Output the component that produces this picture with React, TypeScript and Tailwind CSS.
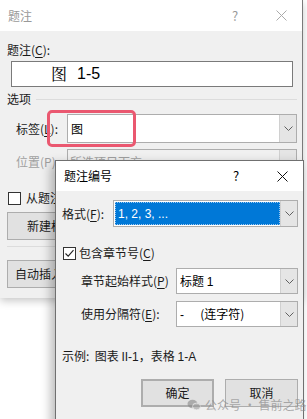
import React from "react";

// Combobox arrow
function Chevron() {
  return (
    <svg width="9" height="5" viewBox="0 0 9 5" fill="none">
      <path d="M0.5 0.5 L4.5 4.5 L8.5 0.5" stroke="#606060" strokeWidth="1" />
    </svg>
  );
}

function Key({ k }: { k: string }) {
  return <span className="underline underline-offset-2">{k}</span>;
}

function Select({
  children,
  className = "",
  disabled = false,
}: {
  children?: React.ReactNode;
  className?: string;
  disabled?: boolean;
}) {
  return (
    <div
      className={`flex border border-[#adadad] ${disabled ? "bg-[#f0f0f0] text-[#a0a0a0]" : "bg-white"} ${className}`}
    >
      <div className="flex-1 flex items-center min-w-0 overflow-hidden whitespace-nowrap">{children}</div>
      <div className="w-[17px] flex items-center justify-center bg-[#e5e5e5] border-l border-[#d0d0d0]">
        <Chevron />
      </div>
    </div>
  );
}

function Checkbox({ checked = false }: { checked?: boolean }) {
  return (
    <div className="w-[13px] h-[13px] shrink-0 border border-[#333] bg-white flex items-center justify-center">
      {checked && (
        <svg width="11" height="11" viewBox="0 0 11 11" fill="none">
          <path d="M1.5 5.5 L4.2 8.2 L9.5 2.2" stroke="#222" strokeWidth="1.1" />
        </svg>
      )}
    </div>
  );
}

function Button({ children, className = "" }: { children: React.ReactNode; className?: string }) {
  return (
    <div
      className={`h-[28px] flex items-center justify-center bg-[#e1e1e1] border border-[#adadad] ${className}`}
    >
      {children}
    </div>
  );
}

export default function App() {
  return (
    <div className="relative w-[307px] h-[419px] overflow-hidden bg-white text-[12px] leading-[16px] text-[#1a1a1a] font-['Noto_Sans_CJK_SC',sans-serif]">
      {/* ── 题注 (back window) ── */}
      <div className="w-[303px] border-r border-[#7a7a7a] shadow-[0_3px_8px_rgba(0,0,0,0.22)]">
        <div className="h-[31px] bg-white flex items-center pl-[8px] text-[#999]">
          <span className="flex-1">题注</span>
          <span className="w-[12px] text-center mr-[35px] text-[13px]">?</span>
          <svg width="11" height="11" viewBox="0 0 11 11" className="mr-[15px]">
            <path d="M0.5 0.5 L10.5 10.5 M10.5 0.5 L0.5 10.5" stroke="#aaa" strokeWidth="1" />
          </svg>
        </div>

        <div className="bg-[#f0f0f0] pl-[7px] pr-[5px] pt-[11px] pb-[10px] flex flex-col">
          <div className="h-[16px]">
            题注(<Key k="C" />):
          </div>
          <div className="mt-[3px] ml-[4px] w-[282px] h-[26px] bg-white border border-[#7a7a7a] flex items-center pl-[39px] text-[16px] text-black">
            <span className="font-['Noto_Serif_CJK_SC','Noto_Sans_CJK_SC',serif]">图</span>
            <span className="ml-[10px] font-['Liberation_Sans',sans-serif]">1-5</span>
          </div>

          <div className="mt-[4px] h-[16px] flex items-center">
            <span>选项</span>
            <div className="flex-1 ml-[5px] h-px bg-[#dcdcdc]" />
          </div>

          <div className="mt-[7px] flex items-center">
            <span className="ml-[9px] w-[51px]">
              标签(<Key k="L" />):
            </span>
            <Select className="w-[230px] h-[29px]">
              <span className="pl-[3px] text-black">图</span>
            </Select>
          </div>

          <div className="mt-[6px] flex items-center">
            <span className="ml-[9px] w-[51px] text-[#a0a0a0]">位置(P)</span>
            <Select disabled className="w-[230px] h-[26px]">
              <span className="pl-[2px]">所选项目下方</span>
            </Select>
          </div>

          {/* the rest of this row lies under the front window */}
          <div className="mt-[15px] h-[16px] w-[47px] overflow-hidden whitespace-nowrap flex items-center gap-[5px] ml-px">
            <Checkbox />
            <span>从题注</span>
          </div>

          <div className="mt-[6px] w-[48px] overflow-hidden">
            <Button className="w-[100px] justify-start pl-[19px]">
              <span className="w-[29px] overflow-hidden whitespace-nowrap">新建标</span>
            </Button>
          </div>

          <div className="mt-[6px] h-px bg-[#dcdcdc]" />

          <div className="mt-[13px] w-[48px] overflow-hidden">
            <Button className="w-[110px] justify-start pl-[7px]">
              <span className="w-[41px] overflow-hidden whitespace-nowrap">自动插入</span>
            </Button>
          </div>
        </div>
      </div>

      {/* red highlight around the label field */}
      <div className="absolute left-[47px] top-[110px] w-[89px] h-[37px] rounded-[5px] border-[3px] border-[#ea5870]" />

      {/* ── 题注编号 (front window) ── */}
      <div className="absolute left-[55px] top-[160px] w-[249px] h-[280px] border border-[#707070] shadow-[-4px_4px_10px_rgba(0,0,0,0.28)] flex flex-col">
        <div className="h-[30px] bg-white flex items-center pl-[8px] text-black">
          <span className="flex-1">题注编号</span>
          <span className="w-[12px] text-center mr-[35px] text-[13px]">?</span>
          <svg width="11" height="11" viewBox="0 0 11 11" className="mr-[15px]">
            <path d="M0.5 0.5 L10.5 10.5 M10.5 0.5 L0.5 10.5" stroke="#111" strokeWidth="1" />
          </svg>
        </div>

        <div className="flex-1 bg-[#f0f0f0] pl-[6px] pr-[5px] pt-[9px] flex flex-col">
          <div className="flex items-center">
            <span className="w-[51px]">
              格式(<Key k="F" />):
            </span>
            <Select className="w-[185px] h-[27px]">
              <div className="ml-px h-[23px] w-full bg-[#0078d7] outline outline-1 outline-dotted outline-[#9cc8f0] -outline-offset-1 text-white flex items-center pl-[3px] font-['Liberation_Sans',sans-serif]">
                1, 2, 3, ...
              </div>
            </Select>
          </div>

          <div className="mt-[18px] h-[16px] flex items-center gap-[3px] ml-px">
            <Checkbox checked />
            <span>
              包含章节号(<Key k="C" />)
            </span>
          </div>

          <div className="mt-[7px] flex items-center">
            <span className="ml-[19px] w-[95px]">
              章节起始样式(<Key k="P" />)
            </span>
            <Select className="w-[122px] h-[26px]">
              <span className="pl-[3px] text-black">
                标题 <span className="font-['Liberation_Sans',sans-serif]">1</span>
              </span>
            </Select>
          </div>

          <div className="mt-[7px] flex items-center">
            <span className="ml-[19px] w-[95px]">
              使用分隔符(<Key k="E" />):
            </span>
            <Select className="w-[122px] h-[26px]">
              <span className="pl-[3px] text-black whitespace-pre">
                <span className="font-['Liberation_Sans',sans-serif]">-</span>
                {"      "}(连字符)
              </span>
            </Select>
          </div>

          <div className="mt-[21px] h-[16px] whitespace-pre">
            示例:  图表 <span className="font-['Liberation_Sans',sans-serif]">II-1</span>，表格{" "}
            <span className="font-['Liberation_Sans',sans-serif]">1-A</span>
          </div>

          <div className="mt-[15px] flex justify-end gap-[11px]">
            <Button className="w-[73px] border-2 border-[#0078d7]">确定</Button>
            <Button className="w-[73px]">取消</Button>
          </div>
        </div>
      </div>

      {/* watermark */}
      <div className="absolute left-[187px] top-[397px] flex items-center gap-[4px] text-[12px] text-[#8a8a8a]/70">
        <svg width="14" height="12" viewBox="0 0 14 12" className="opacity-60">
          <ellipse cx="5.5" cy="5" rx="5" ry="4.2" fill="#888" />
          <ellipse cx="9.5" cy="7.5" rx="4" ry="3.4" fill="#9a9a9a" stroke="#f0f0f0" strokeWidth="0.8" />
        </svg>
        <span>公众号 · 售前之路</span>
      </div>
    </div>
  );
}
